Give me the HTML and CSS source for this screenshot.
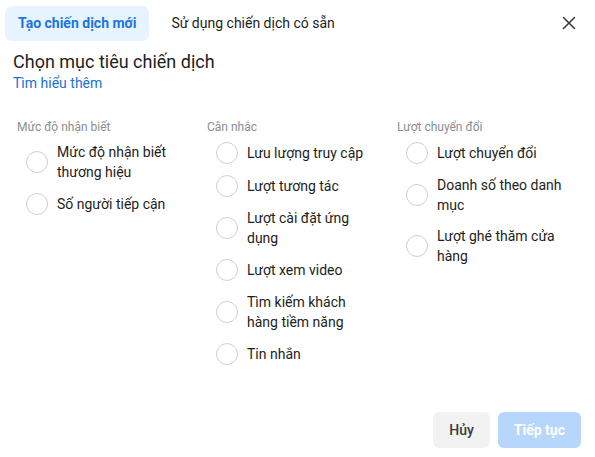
FILE: index.html
```html
<!DOCTYPE html>
<html lang="vi">
<head>
<meta charset="utf-8">
<link rel="stylesheet" href="styles.css">
</head>
<body>
<div class="dialog">
  <div class="header">
    <div class="tabs">
      <div class="tab active">Tạo chiến dịch mới</div>
      <div class="tab">Sử dụng chiến dịch có sẵn</div>
    </div>
    <button class="close" aria-label="Đóng">
      <svg width="14" height="14" viewBox="0 0 14 14"><path d="M1.5 1.5 L12.5 12.5 M12.5 1.5 L1.5 12.5" stroke="#3a3b3c" stroke-width="1.6" stroke-linecap="round"/></svg>
    </button>
  </div>
  <div class="intro">
    <div class="title">Chọn mục tiêu chiến dịch</div>
    <a class="link" href="#">Tìm hiểu thêm</a>
  </div>
  <div class="columns">
    <div class="col">
      <div class="col-title">Mức độ nhận biết</div>
      <div class="opt"><span class="radio"></span><span class="label">Mức độ nhận biết thương hiệu</span></div>
      <div class="opt"><span class="radio"></span><span class="label">Số người tiếp cận</span></div>
    </div>
    <div class="col">
      <div class="col-title">Cân nhắc</div>
      <div class="opt"><span class="radio"></span><span class="label">Lưu lượng truy cập</span></div>
      <div class="opt"><span class="radio"></span><span class="label">Lượt tương tác</span></div>
      <div class="opt"><span class="radio"></span><span class="label">Lượt cài đặt ứng dụng</span></div>
      <div class="opt"><span class="radio"></span><span class="label">Lượt xem video</span></div>
      <div class="opt"><span class="radio"></span><span class="label">Tìm kiếm khách hàng tiềm năng</span></div>
      <div class="opt"><span class="radio"></span><span class="label">Tin nhắn</span></div>
    </div>
    <div class="col">
      <div class="col-title">Lượt chuyển đổi</div>
      <div class="opt"><span class="radio"></span><span class="label">Lượt chuyển đổi</span></div>
      <div class="opt"><span class="radio"></span><span class="label">Doanh số theo danh mục</span></div>
      <div class="opt"><span class="radio"></span><span class="label">Lượt ghé thăm cửa hàng</span></div>
    </div>
  </div>
  <div class="footer">
    <button class="btn cancel">Hủy</button>
    <button class="btn primary">Tiếp tục</button>
  </div>
</div>
</body>
</html>
```
FILE: styles.css
```css
* { box-sizing: border-box; }
html, body { margin: 0; padding: 0; background: #fff; }
body {
  font-family: Roboto, "Liberation Sans", Arial, sans-serif;
  color: #1c1e21;
  width: 595px;
  height: 457px;
  overflow: hidden;
}
.dialog {
  display: flex;
  flex-direction: column;
  height: 457px;
}
.header {
  display: flex;
  align-items: center;
  justify-content: space-between;
  padding: 6px 14px 0 5px;
}
.tabs { display: flex; gap: 0; }
.tab {
  height: 35px;
  line-height: 35px;
  padding: 0 13px;
  font-size: 14px;
  color: #1c1e21;
  border-radius: 7px;
}
.tab + .tab { margin-left: 9px; }
.tab.active {
  background: #e7f3ff;
  color: #1b74e4;
  font-weight: 700;
}
.close {
  border: 0;
  background: none;
  padding: 0;
  width: 24px;
  height: 24px;
  display: flex;
  align-items: center;
  justify-content: center;
  margin-top: -1px;
}
.intro {
  padding: 10px 13px 0;
  display: flex;
  flex-direction: column;
}
.title {
  font-size: 18px;
  line-height: 22px;
  color: #1c1e21;
}
.link {
  font-size: 14px;
  line-height: 18px;
  margin-top: 1px;
  color: #216fdb;
  text-decoration: none;
  align-self: flex-start;
}
.columns {
  display: grid;
  grid-template-columns: 190px 190px 190px;
  padding: 27px 0 0 17px;
}
.col { display: flex; flex-direction: column; }
.col-title {
  font-size: 12px;
  line-height: 16px;
  color: #8a8d91;
  margin-bottom: 2px;
}
.opt {
  display: flex;
  align-items: center;
  padding: 5px 0 6px;
}
.radio {
  width: 22px;
  height: 22px;
  border: 1px solid #ccd0d5;
  border-radius: 50%;
  margin: 0 9px;
  flex: none;
}
.label {
  font-size: 14px;
  line-height: 20px;
  max-width: 128px;
}
.footer {
  margin-top: auto;
  display: flex;
  justify-content: flex-end;
  gap: 8px;
  padding: 0 14px 9px 0;
}
.btn {
  height: 36px;
  border: 0;
  border-radius: 6px;
  font-family: Roboto, "Liberation Sans", Arial, sans-serif;
  font-size: 14px;
  padding: 0 16px;
}
.cancel {
  background: #f2f2f2;
  color: #3a3b3c;
  font-weight: 500;
}
.primary {
  background: #b6d6fc;
  color: #fff;
  font-weight: 700;
}
```
